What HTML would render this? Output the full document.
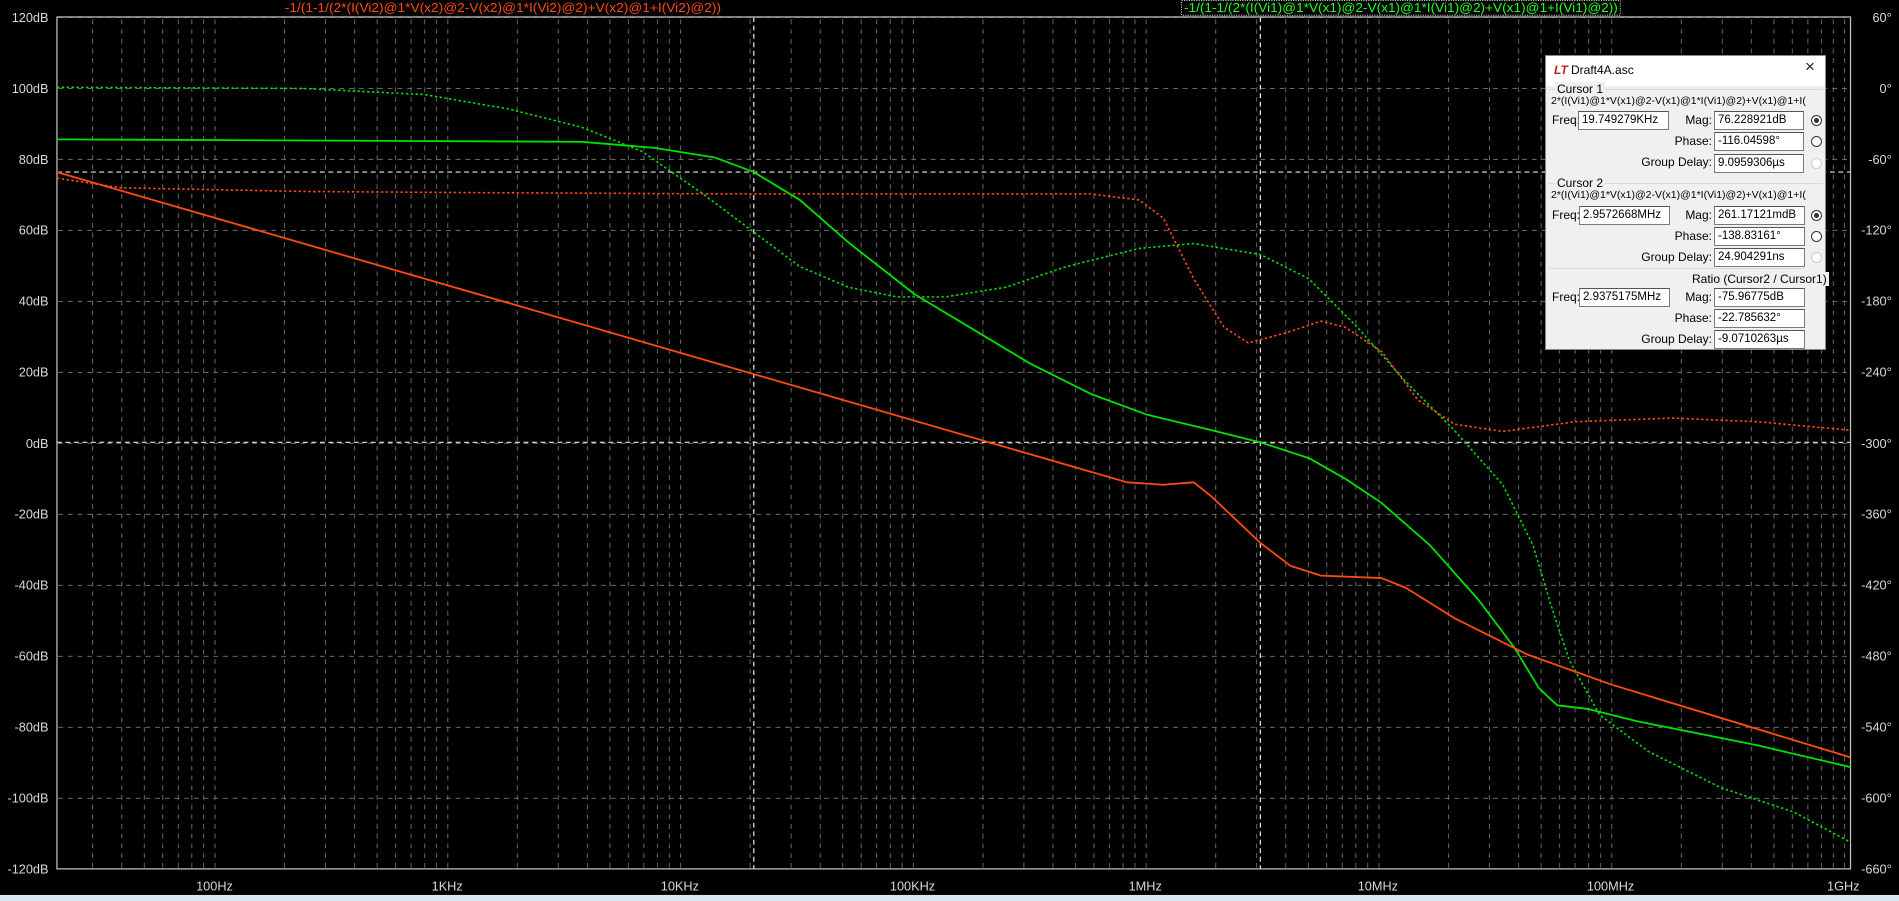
<!DOCTYPE html>
<html><head><meta charset="utf-8"><style>
html,body{margin:0;padding:0;background:#000;width:1899px;height:901px;overflow:hidden;font-family:"Liberation Sans",sans-serif}
svg{position:absolute;left:0;top:0}
.dlg{position:absolute;left:1545px;top:55px;width:281px;height:295px;background:#f0f0f0;border:1px solid #888;box-sizing:border-box;font-size:11px;color:#000}
.tb{position:absolute;left:0;top:0;width:100%;height:30px;background:#fff}
.a{position:absolute;white-space:nowrap;line-height:14px}
.box{position:absolute;background:#fff;border:1px solid #7a7a7a;border-top-color:#555;box-sizing:border-box;height:19px;padding-left:3px;line-height:17px;white-space:nowrap;overflow:hidden;font-size:11.5px}
.r{position:absolute;width:11px;height:11px;border:1px solid #333;border-radius:50%;background:#fff;box-sizing:border-box}
.r.on::after{content:"";position:absolute;left:2px;top:2px;width:5px;height:5px;border-radius:50%;background:#333}
.r.dis{border-color:#ccc}
.gl{position:absolute;border-top:1px solid #d8d8d8}
</style></head><body>
<svg width="1899" height="901" viewBox="0 0 1567 743.5" preserveAspectRatio="none">
<defs>
<pattern id="vx" patternUnits="userSpaceOnUse" x="177" y="0" width="192.1" height="743.5">
<g stroke="#7a7a7a" stroke-width="0.7" stroke-dasharray="4,4">
<line x1="0.4" y1="0" x2="0.4" y2="743.5"/><line x1="57.8" y1="0" x2="57.8" y2="743.5"/><line x1="91.6" y1="0" x2="91.6" y2="743.5"/><line x1="115.6" y1="0" x2="115.6" y2="743.5"/><line x1="134.2" y1="0" x2="134.2" y2="743.5"/><line x1="149.4" y1="0" x2="149.4" y2="743.5"/><line x1="162.2" y1="0" x2="162.2" y2="743.5"/><line x1="173.4" y1="0" x2="173.4" y2="743.5"/><line x1="183.2" y1="0" x2="183.2" y2="743.5"/>
</g></pattern>
<pattern id="hy" patternUnits="userSpaceOnUse" x="0" y="14" width="1567" height="58.58">
<line x1="0" y1="0.4" x2="1567" y2="0.4" stroke="#7a7a7a" stroke-width="0.7" stroke-dasharray="4,4"/>
</pattern>
</defs>
<rect x="0" y="0" width="1567" height="743.5" fill="#000"/>
<rect x="47" y="14" width="1480" height="703" fill="url(#vx)"/>
<rect x="47" y="14" width="1480" height="703" fill="url(#hy)"/>
<g stroke="#e8e8e8" stroke-width="1" stroke-dasharray="4,3">
<line x1="622" y1="14" x2="622" y2="717"/><line x1="1040" y1="14" x2="1040" y2="717"/>
<line x1="47" y1="142" x2="1527" y2="142"/><line x1="47" y1="365" x2="1527" y2="365"/>
</g>
<rect x="47" y="14" width="1480" height="703" fill="none" stroke="#c8c8c8" stroke-width="1"/>
<g stroke-linejoin="round" fill="none">
<polyline stroke="#00e000" stroke-width="1.3" stroke-dasharray="2,2" points="47,72 250,73 350,78 420,90 480,105 530,125 580,160 620,190 660,220 700,237 740,245 780,245 830,237 880,220 940,205 985,201 1040,210 1080,230 1120,270 1160,315 1200,355 1240,400 1265,450 1280,500 1295,545 1320,590 1360,620 1420,650 1480,670 1527,695"/>
<polyline stroke="#ff4a10" stroke-width="1.3" stroke-dasharray="2,2" points="47,147 100,155 250,158 400,159 600,160 900,160 940,165 960,180 985,230 1010,270 1030,283 1060,275 1090,265 1110,270 1140,290 1170,330 1200,350 1240,356 1300,348 1380,345 1450,348 1527,355"/>
<polyline stroke="#00e000" stroke-width="1.5" points="47,115 480,117 540,122 590,130 622,142 660,165 700,200 755,243 800,270 850,300 900,325 946,342 1000,355 1040,365 1080,378 1110,395 1140,415 1180,450 1220,495 1250,535 1270,568 1285,582 1310,585 1350,595 1400,605 1450,615 1527,633"/>
<polyline stroke="#ff4a10" stroke-width="1.5" points="47,142 930,398 960,400 985,398 1000,410 1040,448 1065,467 1090,475 1140,477 1160,485 1200,510 1260,540 1330,565 1527,625"/>
</g>
<g font-size="10.5" fill="#d8d8d8" text-anchor="end">
<text x="40" y="18">120dB</text><text x="40" y="76.6">100dB</text><text x="40" y="135.2">80dB</text><text x="40" y="193.7">60dB</text><text x="40" y="252.3">40dB</text><text x="40" y="310.9">20dB</text><text x="40" y="369.5">0dB</text><text x="40" y="428">-20dB</text><text x="40" y="486.6">-40dB</text><text x="40" y="545.2">-60dB</text><text x="40" y="603.8">-80dB</text><text x="40" y="662.4">-100dB</text><text x="40" y="721">-120dB</text>
</g>
<g font-size="10.5" fill="#d8d8d8" text-anchor="end">
<text x="1561" y="18">60°</text><text x="1561" y="76.6">0°</text><text x="1561" y="135.2">-60°</text><text x="1561" y="193.7">-120°</text><text x="1561" y="252.3">-180°</text><text x="1561" y="310.9">-240°</text><text x="1561" y="369.5">-300°</text><text x="1561" y="428">-360°</text><text x="1561" y="486.6">-420°</text><text x="1561" y="545.2">-480°</text><text x="1561" y="603.8">-540°</text><text x="1561" y="662.4">-600°</text><text x="1561" y="721">-660°</text>
</g>
<g font-size="10.5" fill="#d8d8d8" text-anchor="middle">
<text x="177" y="735">100Hz</text><text x="369" y="735">1KHz</text><text x="561" y="735">10KHz</text><text x="753" y="735">100KHz</text><text x="945" y="735">1MHz</text><text x="1137" y="735">10MHz</text><text x="1329" y="735">100MHz</text><text x="1521" y="735">1GHz</text>
</g>
<rect x="975" y="0.5" width="362" height="12" fill="none" stroke="#ddd" stroke-width="0.7" stroke-dasharray="1,1"/>
<g font-size="11">
<text x="235" y="10" fill="#ff4a10" textLength="360" lengthAdjust="spacingAndGlyphs">-1/(1-1/(2*(I(Vi2)@1*V(x2)@2-V(x2)@1*I(Vi2)@2)+V(x2)@1+I(Vi2)@2))</text>
<text x="977" y="10" fill="#20ff20" textLength="358" lengthAdjust="spacingAndGlyphs">-1/(1-1/(2*(I(Vi1)@1*V(x1)@2-V(x1)@1*I(Vi1)@2)+V(x1)@1+I(Vi1)@2))</text>
</g>
<rect x="0" y="738.5" width="1567" height="5" fill="#dbe6f4"/>
</svg>
<div class="dlg">
<div class="tb"></div>
<div class="a" style="left:8px;top:7px;color:#b22;font-weight:bold;font-style:italic;font-size:12px">LT</div>
<div class="a" style="left:25px;top:7px;font-size:12px">Draft4A.asc</div>
<div class="a" style="left:259px;top:4px;font-size:17px;color:#222">×</div>
<div class="gl" style="left:3px;top:33px;width:274px"></div>
<div class="a" style="left:9px;top:26px;background:#f0f0f0;padding:0 2px;font-size:12px">Cursor 1</div>
<div class="a" style="left:5px;top:38px;font-size:10.5px">2*(I(Vi1)@1*V(x1)@2-V(x1)@1*I(Vi1)@2)+V(x1)@1+I(</div>
<div class="a" style="left:6px;top:57px;font-size:12px">Freq:</div><div class="box" style="left:32px;top:55px;width:91px">19.749279KHz</div>
<div class="a" style="left:128px;top:57px;width:38px;text-align:right;font-size:12px">Mag:</div><div class="box" style="left:168px;top:55px;width:90px">76.228921dB</div><div class="r on" style="left:265px;top:59px"></div>
<div class="a" style="left:110px;top:78px;width:56px;text-align:right;font-size:12px">Phase:</div><div class="box" style="left:168px;top:76px;width:90px">-116.04598°</div><div class="r" style="left:265px;top:80px"></div>
<div class="a" style="left:80px;top:99px;width:86px;text-align:right;font-size:12px">Group Delay:</div><div class="box" style="left:168px;top:98px;width:90px">9.0959306µs</div><div class="r dis" style="left:265px;top:102px"></div>
<div class="gl" style="left:3px;top:127px;width:274px"></div>
<div class="a" style="left:9px;top:120px;background:#f0f0f0;padding:0 2px;font-size:12px">Cursor 2</div>
<div class="a" style="left:5px;top:132px;font-size:10.5px">2*(I(Vi1)@1*V(x1)@2-V(x1)@1*I(Vi1)@2)+V(x1)@1+I(</div>
<div class="a" style="left:6px;top:152px;font-size:12px">Freq:</div><div class="box" style="left:33px;top:150px;width:91px">2.9572668MHz</div>
<div class="a" style="left:128px;top:152px;width:38px;text-align:right;font-size:12px">Mag:</div><div class="box" style="left:168px;top:150px;width:91px">261.17121mdB</div><div class="r on" style="left:265px;top:154px"></div>
<div class="a" style="left:110px;top:173px;width:56px;text-align:right;font-size:12px">Phase:</div><div class="box" style="left:168px;top:171px;width:91px">-138.83161°</div><div class="r" style="left:265px;top:175px"></div>
<div class="a" style="left:80px;top:194px;width:86px;text-align:right;font-size:12px">Group Delay:</div><div class="box" style="left:168px;top:192px;width:91px">24.904291ns</div><div class="r dis" style="left:265px;top:196px"></div>
<div class="gl" style="left:3px;top:212px;width:255px"></div>
<div class="a" style="left:144px;top:216px;background:#f0f0f0;padding:0 2px;font-size:12px">Ratio (Cursor2 / Cursor1)</div>
<div class="a" style="left:6px;top:234px;font-size:12px">Freq:</div><div class="box" style="left:33px;top:232px;width:91px">2.9375175MHz</div>
<div class="a" style="left:128px;top:234px;width:38px;text-align:right;font-size:12px">Mag:</div><div class="box" style="left:168px;top:232px;width:91px">-75.96775dB</div>
<div class="a" style="left:110px;top:255px;width:56px;text-align:right;font-size:12px">Phase:</div><div class="box" style="left:168px;top:253px;width:91px">-22.785632°</div>
<div class="a" style="left:80px;top:276px;width:86px;text-align:right;font-size:12px">Group Delay:</div><div class="box" style="left:168px;top:274px;width:91px">-9.0710263µs</div>
</div>
</body></html>
